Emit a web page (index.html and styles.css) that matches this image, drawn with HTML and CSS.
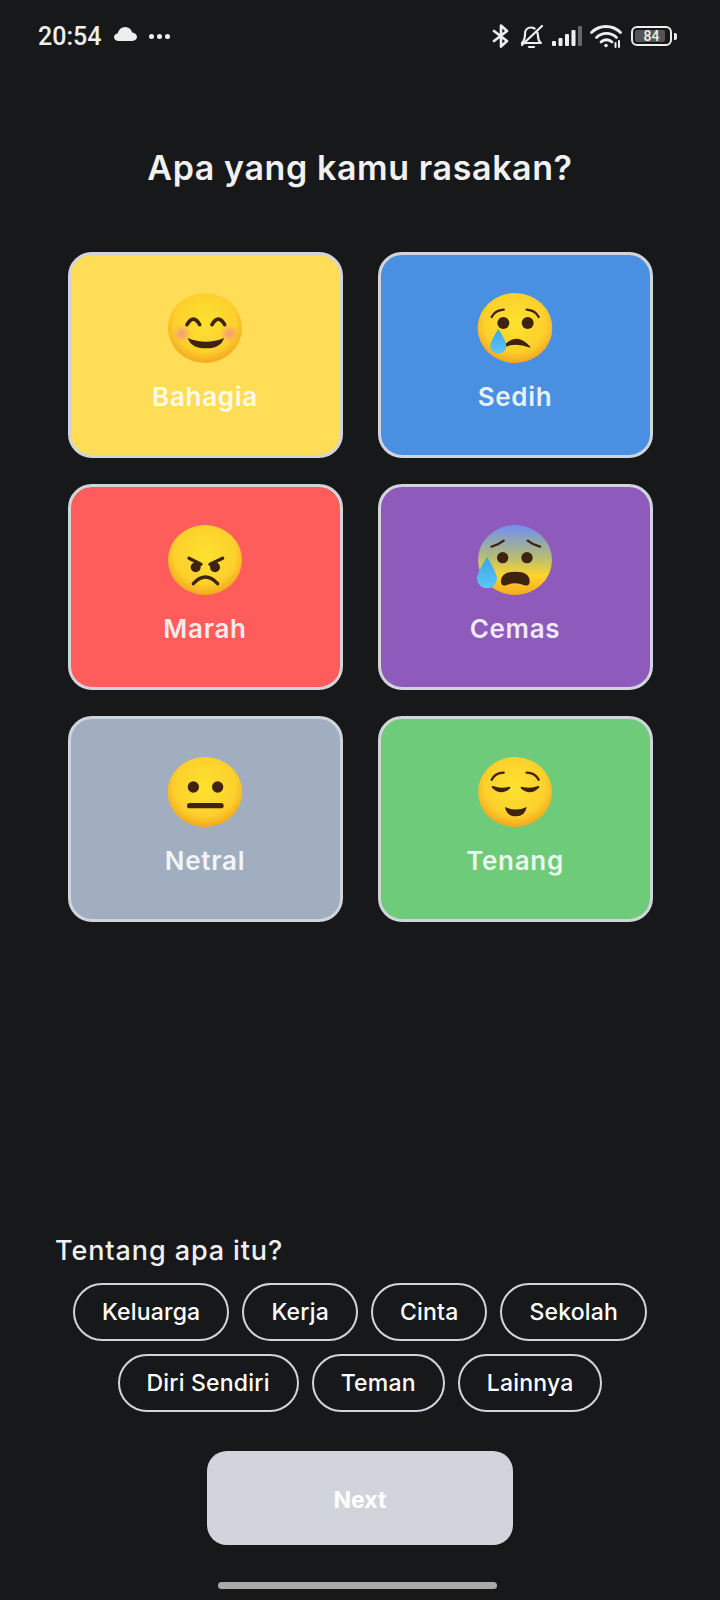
FILE: index.html
```html
<!DOCTYPE html>
<html lang="id">
<head>
    <meta charset="UTF-8">
    <meta name="viewport" content="width=device-width, initial-scale=1.0">
    <title>Apa yang kamu rasakan?</title>
    <link rel="stylesheet" href="styles.css">
</head>
<body>
    <svg class="defs" width="0" height="0">
        <defs>
            <radialGradient id="face" cx="50%" cy="42%" r="58%">
                <stop offset="0" stop-color="#fde22f"/>
                <stop offset="0.72" stop-color="#fdd02c"/>
                <stop offset="1" stop-color="#f3a81f"/>
            </radialGradient>
            <linearGradient id="faceCold" x1="0" y1="0" x2="0" y2="1">
                <stop offset="0" stop-color="#6f8ff0"/>
                <stop offset="0.45" stop-color="#b3bc78"/>
                <stop offset="0.72" stop-color="#fdd52b"/>
                <stop offset="1" stop-color="#f6ab20"/>
            </linearGradient>
            <radialGradient id="cheek">
                <stop offset="0" stop-color="#f58f8f" stop-opacity="0.85"/>
                <stop offset="1" stop-color="#f58f8f" stop-opacity="0"/>
            </radialGradient>
            <linearGradient id="tear" x1="0" y1="0" x2="0" y2="1">
                <stop offset="0" stop-color="#3ba4e8"/>
                <stop offset="1" stop-color="#5cc6f5"/>
            </linearGradient>
        </defs>
    </svg>

    <div class="screen">
        <div class="status-bar">
            <div class="status-left">
                <span class="clock">20:54</span>
                <svg class="cloud" width="23" height="14" viewBox="0 0 23 14"><path d="M5 14C2 14 0 12.4 0 10.2 0 8.2 1.6 6.8 3.6 6.6 4.6 2.8 7.6 0 11.2 0c3.600 0 6 2.200 7 5.600 2.700.2 4.800 2 4.800 4.500C23 12.400 21 14 18.400 14z" fill="#eceded"/></svg>
                <span class="dots"><i></i><i></i><i></i></span>
            </div>
            <div class="status-right">
                <svg class="bluetooth" width="18" height="24" viewBox="0 0 18 24" fill="none" stroke="#eee" stroke-width="2.600" stroke-linecap="round" stroke-linejoin="round"><path d="M2 7l13 10-6 5.500V1.500L15 7 2 17"/></svg>
                <svg width="24" height="25" viewBox="0 0 24 25" fill="none" stroke="#eee" stroke-width="2.200" stroke-linecap="round" stroke-linejoin="round"><path d="M2 19h19c-2.500-2-3-4-3-7 0-1.500-.3-3-1-4"/><path d="M14.500 4.500C13.500 3.800 12.500 3.500 11 3.500 7.500 3.500 5 6.200 5 10c0 4-1 7-3 9"/><path d="M2 21L22 2"/><path d="M9 23h5"/></svg>
                <svg width="30" height="20" viewBox="0 0 30 20"><rect x="0" y="15" width="4" height="5" rx="1" fill="#eee"/><rect x="6.500" y="12" width="4" height="8" rx="1" fill="#eee"/><rect x="13" y="8" width="4" height="12" rx="1" fill="#eee"/><rect x="19.500" y="4" width="4" height="16" rx="1" fill="#eee"/><rect x="26" y="0" width="4" height="20" rx="1" fill="#666"/></svg>
                <svg width="33" height="24" viewBox="0 0 33 24" fill="none" stroke="#eee" stroke-width="2.800" stroke-linecap="round"><path d="M1.500 8.500C9.500.5 22.500.5 30.500 8.500"/><path d="M6.500 13.500c5.500-5.500 14.500-5.500 20 0"/><path d="M11 18c3-3 8-3 11 0"/><circle cx="16" cy="21.500" r="1.800" fill="#eee" stroke="none"/><path d="M25.500 19v4M29 17v6" stroke-width="2"/></svg>
                <div class="battery">
                    <div class="battery-body"><span class="battery-level"></span><span class="battery-text">84</span></div>
                    <span class="battery-tip"></span>
                </div>
            </div>
        </div>

        <h1 class="title">Apa yang kamu rasakan?</h1>

        <div class="mood-grid">
            <div class="mood-card yellow">
                <svg class="emoji" viewBox="0 0 240 225">
                    <ellipse cx="120" cy="105" rx="111" ry="105" fill="url(#face)"/>
                    <circle cx="50" cy="122" r="28" fill="url(#cheek)"/>
                    <circle cx="193" cy="122" r="28" fill="url(#cheek)"/>
                    <path d="M66 95Q85 62 104 95M141 95Q160 62 179 95" fill="none" stroke="#3e2410" stroke-width="11" stroke-linecap="round"/>
                    <path d="M68 135Q123 158 177 135Q168 166 123 166Q78 166 68 135z" fill="#3e2410"/>
                </svg>
                <span class="mood-name">Bahagia</span>
            </div>
            <div class="mood-card blue">
                <svg class="emoji" viewBox="0 0 240 225">
                    <ellipse cx="120" cy="105" rx="112" ry="105" fill="url(#face)"/>
                    <path d="M50 72Q60 52 86 50M155 50Q181 52 191 72" fill="none" stroke="#3e2410" stroke-width="7" stroke-linecap="round"/>
                    <circle cx="85" cy="90" r="18" fill="#3e2410"/>
                    <circle cx="158" cy="90" r="18" fill="#3e2410"/>
                    <path d="M88 160Q123 118 164 162Q125 146 88 160z" fill="#3e2410" stroke="#3e2410" stroke-width="4" stroke-linejoin="round"/>
                    <path d="M70 108Q46 145 46 158A24 24 0 0 0 94 158Q94 145 70 108z" fill="url(#tear)"/>
                </svg>
                <span class="mood-name">Sedih</span>
            </div>
            <div class="mood-card red">
                <svg class="emoji" viewBox="0 0 240 225">
                    <ellipse cx="120" cy="105" rx="111" ry="105" fill="url(#face)"/>
                    <path d="M72 100L108 118M173 100L135 118" fill="none" stroke="#3e2410" stroke-width="10" stroke-linecap="round"/>
                    <circle cx="92" cy="127" r="15" fill="#3e2410"/>
                    <circle cx="150" cy="127" r="15" fill="#3e2410"/>
                    <path d="M85 176Q121 136 158 176" fill="none" stroke="#3e2410" stroke-width="10" stroke-linecap="round"/>
                </svg>
                <span class="mood-name">Marah</span>
            </div>
            <div class="mood-card purple">
                <svg class="emoji" viewBox="0 0 240 225">
                    <ellipse cx="120" cy="105" rx="111" ry="105" fill="url(#faceCold)"/>
                    <path d="M50 65Q70 60 86 47M158 47Q174 60 195 65" fill="none" stroke="#3e2410" stroke-width="7" stroke-linecap="round"/>
                    <circle cx="83" cy="98" r="17" fill="#3e2410"/>
                    <circle cx="156" cy="98" r="17" fill="#3e2410"/>
                    <path d="M78 172Q76 140 121 140Q166 140 164 172Q162 186 146 180Q121 170 96 180Q80 186 78 172z" fill="#3e2410"/>
                    <path d="M36 95Q6 145 6 160A30 30 0 0 0 66 160Q66 145 36 95z" fill="url(#tear)"/>
                </svg>
                <span class="mood-name">Cemas</span>
            </div>
            <div class="mood-card grey">
                <svg class="emoji" viewBox="0 0 240 225">
                    <ellipse cx="120" cy="105" rx="112" ry="105" fill="url(#face)"/>
                    <circle cx="85" cy="90" r="17" fill="#3e2410"/>
                    <circle cx="158" cy="90" r="17" fill="#3e2410"/>
                    <rect x="66" y="138" width="110" height="16" rx="8" fill="#3e2410"/>
                </svg>
                <span class="mood-name">Netral</span>
            </div>
            <div class="mood-card green">
                <svg class="emoji" viewBox="0 0 240 225">
                    <ellipse cx="120" cy="105" rx="111" ry="105" fill="url(#face)"/>
                    <path d="M50 68Q60 48 86 47M155 47Q181 48 191 68" fill="none" stroke="#3e2410" stroke-width="7" stroke-linecap="round"/>
                    <path d="M53 90Q78 114 103 92Q78 100 53 90zM140 92Q165 114 190 90Q165 100 140 92z" fill="#3e2410" stroke="#3e2410" stroke-width="6" stroke-linejoin="round"/>
                    <path d="M90 150Q123 165 155 150Q150 178 123 178Q95 178 90 150z" fill="#3e2410"/>
                </svg>
                <span class="mood-name">Tenang</span>
            </div>
        </div>

        <div class="topic">
            <p class="topic-label">Tentang apa itu?</p>
            <div class="chips">
                <span class="chip">Keluarga</span>
                <span class="chip">Kerja</span>
                <span class="chip">Cinta</span>
                <span class="chip">Sekolah</span>
                <span class="chip">Diri Sendiri</span>
                <span class="chip">Teman</span>
                <span class="chip">Lainnya</span>
            </div>
        </div>

        <button class="next-btn" type="button">Next</button>
        <div class="home-bar"></div>
    </div>
</body>
</html>
```

FILE: styles.css
```css
body {
    margin: 0;
    background: #17181a;
    font-family: Inter, "Noto Sans", sans-serif;
    color: #fff;
}
.defs {
    display: block;
    height: 0;
}
.screen {
    height: 1600px;
    display: flex;
    flex-direction: column;
    align-items: center;
    overflow: hidden;
}
.status-bar {
    width: 100%;
    height: 72px;
    box-sizing: border-box;
    padding: 0 43px 0 38px;
    display: flex;
    align-items: center;
    justify-content: space-between;
}
.status-left {
    display: flex;
    align-items: center;
}
.clock {
    font-family: Roboto, sans-serif;
    font-size: 25px;
    font-weight: 500;
    color: #efefef;
}
.cloud {
    margin: 0 0 5px 13px;
}
.dots {
    display: flex;
    gap: 3px;
    margin: 0 0 0 12px;
}
.dots i {
    width: 5px;
    height: 5px;
    border-radius: 50%;
    background: #eee;
}
.status-right {
    display: flex;
    align-items: center;
    gap: 8px;
}
.bluetooth {
    margin-right: 2px;
}
.battery {
    display: flex;
    align-items: center;
    gap: 2px;
}
.battery-body {
    position: relative;
    width: 41px;
    height: 20px;
    box-sizing: border-box;
    border: 2px solid #eee;
    border-radius: 6px;
    display: flex;
    align-items: center;
    justify-content: center;
    font-family: Roboto, sans-serif;
    font-size: 14px;
    font-weight: 500;
    color: #eee;
}
.battery-level {
    position: absolute;
    left: 2px;
    top: 2px;
    bottom: 2px;
    width: 30px;
    background: #555;
    border-radius: 2px;
}
.battery-text {
    position: relative;
}
.battery-tip {
    width: 3px;
    height: 7px;
    background: #eee;
    border-radius: 0 2px 2px 0;
}
.title {
    margin: 76px 0 64px;
    font-size: 34px;
    line-height: 40px;
    font-weight: 600;
    letter-spacing: 0.6px;
    color: #f1f1f1;
}
.mood-grid {
    display: grid;
    grid-template-columns: 275px 275px;
    grid-auto-rows: 206px;
    gap: 26px 35px;
}
.mood-card {
    box-sizing: border-box;
    border: 3px solid #d1d5db;
    border-radius: 24px;
    padding-top: 38px;
    display: flex;
    flex-direction: column;
    align-items: center;
}
.yellow { background: #ffdd57; }
.blue { background: #4a90e2; }
.red { background: #ff5c5c; }
.purple { background: #8e5bbd; }
.grey { background: #a0aec0; }
.green { background: #6ecb7a; }
.emoji {
    width: 80px;
    height: 75px;
    flex: none;
}
.mood-name {
    margin-top: 12px;
    font-size: 26px;
    line-height: 34px;
    font-weight: 600;
    letter-spacing: 0.7px;
    color: rgba(255, 255, 255, 0.88);
}
.topic {
    margin-top: auto;
    width: 100%;
}
.topic-label {
    margin: 0 0 15px 55px;
    font-size: 27px;
    line-height: 34px;
    font-weight: 500;
    color: #f0f0f0;
    letter-spacing: 0.9px;
}
.chips {
    display: flex;
    flex-wrap: wrap;
    justify-content: center;
    gap: 13px;
    padding: 0 60px;
}
.chip {
    height: 58px;
    box-sizing: border-box;
    padding: 0 27px;
    border: 2px solid #d1d5db;
    border-radius: 29px;
    display: flex;
    align-items: center;
    font-size: 23px;
    font-weight: 500;
    letter-spacing: 0.2px;
}
.next-btn {
    width: 306px;
    height: 94px;
    margin-top: 39px;
    padding-top: 4px;
    border: none;
    border-radius: 20px;
    background: #d1d5db;
    color: #fff;
    font-family: inherit;
    font-size: 23px;
    font-weight: 700;
}
.home-bar {
    width: 279px;
    height: 7px;
    margin: 37px 5px 11px 0;
    border-radius: 4px;
    background: #a9a9a9;
}
```
